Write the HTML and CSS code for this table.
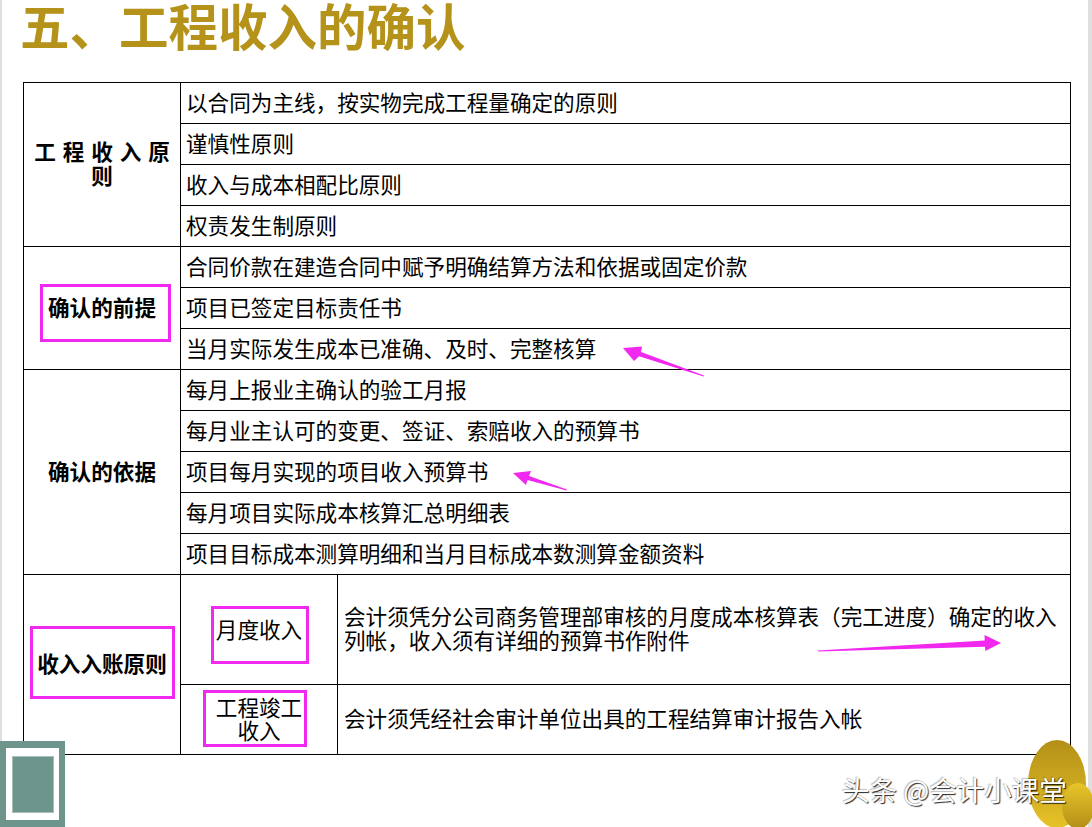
FILE: index.html
```html
<!DOCTYPE html>
<html lang="zh-CN">
<head>
<meta charset="utf-8">
<title>五、工程收入的确认</title>
<link rel="stylesheet" href="styles.css">
</head>
<body>
<div class="slide">
  <h1 class="title">五、工程收入的确认</h1>
  <div class="grid">
    <div class="label sec1"><span class="spaced">工 程 收 入 原</span><span>则</span></div>
    <div class="item">以合同为主线，按实物完成工程量确定的原则</div>
    <div class="item">谨慎性原则</div>
    <div class="item">收入与成本相配比原则</div>
    <div class="item">权责发生制原则</div>

    <div class="label sec2">确认的前提</div>
    <div class="item">合同价款在建造合同中赋予明确结算方法和依据或固定价款</div>
    <div class="item">项目已签定目标责任书</div>
    <div class="item">当月实际发生成本已准确、及时、完整核算</div>

    <div class="label sec3">确认的依据</div>
    <div class="item">每月上报业主确认的验工月报</div>
    <div class="item">每月业主认可的变更、签证、索赔收入的预算书</div>
    <div class="item">项目每月实现的项目收入预算书</div>
    <div class="item">每月项目实际成本核算汇总明细表</div>
    <div class="item">项目目标成本测算明细和当月目标成本数测算金额资料</div>

    <div class="label sec4">收入入账原则</div>
    <div class="sub">月度收入</div>
    <div class="desc">会计须凭分公司商务管理部审核的月度成本核算表（完工进度）确定的收入<br>列帐，收入须有详细的预算书作附件</div>
    <div class="sub">工程竣工<br>收入</div>
    <div class="desc">会计须凭经社会审计单位出具的工程结算审计报告入帐</div>
  </div>

  <svg class="overlay" width="1092" height="827" viewBox="0 0 1092 827" aria-hidden="true">
    <defs>
      <linearGradient id="goldA" x1="0" y1="0" x2="0" y2="1">
        <stop offset="0" stop-color="#b38f18"/>
        <stop offset="1" stop-color="#e7c328"/>
      </linearGradient>
      <linearGradient id="goldB" x1="0" y1="0" x2="0" y2="1">
        <stop offset="0" stop-color="#e8c62a"/>
        <stop offset="1" stop-color="#b38e18"/>
      </linearGradient>
    </defs>
    <g fill="none" stroke="#f028f0" stroke-width="3">
      <rect x="41.5" y="285.5" width="128" height="55"/>
      <rect x="31.5" y="627.5" width="142" height="70"/>
      <rect x="212.5" y="607.5" width="95" height="55"/>
      <rect x="204.5" y="691.5" width="101" height="54"/>
    </g>
    <g fill="#f028f0">
      <polygon points="623,348 642,346.5 641,352 704,375.6 703.6,376.6 639,356.3 634,361"/>
      <polygon points="513,473 531,471 529,476 567,489.6 566.6,490.4 527.5,480 526,485"/>
      <polygon points="1001,643 984.5,635 984.7,640.5 818,650.5 818,651.5 985,646.8 985.3,651"/>
    </g>
    <rect x="0" y="741" width="65" height="86" fill="#6e958b"/>
    <rect x="6" y="748" width="53" height="72" fill="#ffffff"/>
    <rect x="12.5" y="756.5" width="41" height="56" fill="#6e958b" stroke="#a9c0b9" stroke-width="1"/>
    <ellipse cx="1057" cy="784" rx="29" ry="44" fill="url(#goldA)"/>
    <ellipse cx="1078" cy="806" rx="16" ry="23" fill="url(#goldB)"/>
  </svg>
  <div class="watermark">头条 @会计小课堂</div>
</div>
</body>
</html>
```
FILE: styles.css
```css
* { box-sizing: border-box; }
html, body { margin: 0; padding: 0; background: #ffffff; }
body { font-family: "Noto Sans CJK SC", "Noto Sans", sans-serif; color: #000; }

.slide {
  position: relative;
  width: 1092px;
  height: 827px;
  overflow: hidden;
  background: #ffffff;
  box-shadow: inset 2px 0 0 #dedede, inset -4px 0 0 #dedede;
}

.title {
  margin: -11px 0 0 0;
  height: 93px;
  padding-left: 20px;
  font-size: 49.5px;
  line-height: normal;
  font-weight: 700;
  color: #b5931b;
  white-space: nowrap;
}

.grid {
  margin-left: 23px;
  width: 1048px;
  display: grid;
  grid-template-columns: 156px 156px 1fr;
  grid-template-rows: repeat(12, 40px) 109px 69px;
  gap: 1px;
  padding: 1px;
  background: #000;
  font-size: 21.6px;
}

.grid > div { background: #fff; display: flex; align-items: center; padding-bottom: 3px; }

.label {
  grid-column: 1;
  flex-direction: column;
  justify-content: center;
  font-weight: 700;
  text-align: center;
  line-height: 24px;
}
.sec1 { grid-row: 1 / span 4; }
.sec2 { grid-row: 5 / span 3; }
.sec3 { grid-row: 8 / span 5; }
.sec4 { grid-row: 13 / span 2; }
.spaced { word-spacing: 2px; white-space: nowrap; }

.item { grid-column: 2 / 4; padding-left: 5px; white-space: nowrap; }

.sub {
  grid-column: 2;
  justify-content: center;
  text-align: center;
  line-height: 23px;
}

.desc {
  grid-column: 3;
  padding-left: 6px;
  line-height: 24px;
  white-space: nowrap;
}

.overlay { position: absolute; left: 0; top: 0; pointer-events: none; }

.watermark {
  position: absolute;
  left: 842px;
  top: 772px;
  font-size: 27.5px;
  line-height: 34px;
  color: #ffffff;
  white-space: nowrap;
  text-shadow: 1px 1px 1px rgba(0, 0, 0, 0.85), -1px -1px 1px rgba(0, 0, 0, 0.25);
}
```
